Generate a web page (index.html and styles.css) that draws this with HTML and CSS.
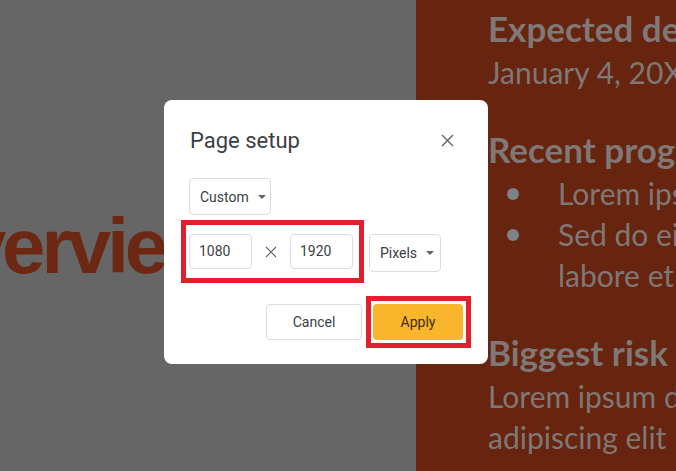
FILE: index.html
```html
<!doctype html>
<html>
<head>
    <title>Page setup</title>
    <meta charset="utf-8">
    <link rel="stylesheet" href="styles.css">
</head>
<body>
    <div class="slide">
        <div class="slide-left">
            <h1 class="slide-title">Overview</h1>
        </div>
        <div class="slide-right">
            <h2>Expected delivery</h2>
            <p>January 4, 20XX</p>
            <h2 class="gap">Recent progress</h2>
            <ul>
                <li>Lorem ipsum dolor</li>
                <li>Sed do eiusmod tempor<br>labore et dolore</li>
            </ul>
            <h2 class="gap">Biggest risk</h2>
            <p>Lorem ipsum dolor sit<br>adipiscing elit</p>
        </div>
    </div>

    <div class="dialog">
        <div class="dialog-head">
            <span class="dialog-title">Page setup</span>
            <svg class="close" width="13" height="13" viewBox="0 0 13 13">
                <path d="M1 1L12 12M12 1L1 12" stroke="#5f6368" stroke-width="1.4" fill="none"/>
            </svg>
        </div>
        <div class="select custom">Custom <span class="caret"></span></div>
        <div class="size-row">
            <div class="field">1080</div>
            <span class="times">
                <svg width="12" height="12" viewBox="0 0 12 12">
                    <path d="M1 1L11 11M11 1L1 11" stroke="#5f6368" stroke-width="1.1" fill="none"/>
                </svg>
            </span>
            <div class="field">1920</div>
            <div class="select pixels">Pixels <span class="caret"></span></div>
        </div>
        <div class="actions">
            <button class="btn cancel">Cancel</button>
            <button class="btn apply">Apply</button>
        </div>
        <div class="mark mark-size"></div>
        <div class="mark mark-apply"></div>
    </div>
</body>
</html>
```

FILE: styles.css
```css
* {
    margin: 0;
    padding: 0;
    box-sizing: border-box;
}

body {
    width: 676px;
    height: 471px;
    overflow: hidden;
    position: relative;
    font-family: Lato, 'Liberation Sans', sans-serif;
}

.slide {
    display: flex;
    height: 471px;
}

.slide-left {
    width: 416px;
    background: #666666;
    overflow: hidden;
}

.slide-title {
    font-family: 'Liberation Sans', Arial, sans-serif;
    font-weight: bold;
    font-size: 78px;
    line-height: 78px;
    color: #6c2813;
    white-space: nowrap;
    margin-top: 207px;
    margin-left: -94px;
    letter-spacing: -4px;
}

.slide-right {
    flex: 1;
    background: #67240f;
    color: #7f7876;
    padding: 4px 0 0 72px;
    white-space: nowrap;
    overflow: hidden;
}

.slide-right h2 {
    font-size: 35px;
    font-weight: 700;
    line-height: 48px;
}

.slide-right h2.gap {
    margin-top: 32px;
}

.slide-right p {
    font-size: 30px;
    line-height: 41px;
}

.slide-right ul {
    list-style: none;
    font-size: 30px;
    line-height: 41px;
}

.slide-right li {
    position: relative;
    padding-left: 70px;
}

.slide-right li::before {
    content: '';
    position: absolute;
    left: 19px;
    top: 15px;
    width: 12px;
    height: 12px;
    border-radius: 50%;
    background: #7d8286;
}

.dialog {
    position: absolute;
    left: 164px;
    top: 100px;
    width: 324px;
    height: 264px;
    background: #ffffff;
    border-radius: 8px;
    padding: 26px 25px 24px 25px;
    font-family: Roboto, 'Noto Sans', sans-serif;
    color: #3c4043;
}

.dialog-head {
    display: flex;
    justify-content: space-between;
    align-items: center;
    height: 28px;
}

.dialog-title {
    font-size: 22px;
    padding-left: 1px;
    color: #3c4043;
}

.close {
    margin-right: 9px;
}

.select {
    display: inline-flex;
    align-items: center;
    height: 37px;
    border: 1px solid #dadce0;
    border-radius: 4px;
    font-size: 14px;
    padding: 0 8px 0 10px;
}

.custom {
    margin-top: 24px;
    width: 82px;
}

.caret {
    display: inline-block;
    margin-left: 9px;
    border-left: 4px solid transparent;
    border-right: 4px solid transparent;
    border-top: 4px solid #5f6368;
}

.size-row {
    display: flex;
    align-items: flex-start;
    margin-top: 19px;
    height: 38px;
}

.field {
    width: 63px;
    height: 35px;
    border: 1px solid #dadce0;
    border-radius: 4px;
    font-size: 14px;
    line-height: 33px;
    padding-left: 9px;
}

.times {
    width: 38px;
    height: 35px;
    display: flex;
    align-items: center;
    justify-content: center;
}

.pixels {
    margin-left: 16px;
    width: 72px;
    height: 38px;
    padding-left: 10px;
}

.actions {
    display: flex;
    justify-content: flex-end;
    gap: 11px;
    margin-top: 32px;
}

.btn {
    height: 36px;
    border-radius: 4px;
    font-family: Roboto, 'Noto Sans', sans-serif;
    font-size: 14px;
    font-weight: 400;
    color: #3c4043;
}

.cancel {
    width: 96px;
    background: #ffffff;
    border: 1px solid #dadce0;
}

.apply {
    width: 90px;
    background: #f9b52c;
    border: none;
    color: #3b2e10;
}

.mark {
    position: absolute;
    border: 5px solid #e0202d;
}

.mark-size {
    left: 17px;
    top: 120px;
    width: 183px;
    height: 63px;
}

.mark-apply {
    left: 202px;
    top: 196px;
    width: 105px;
    height: 52px;
}
```
